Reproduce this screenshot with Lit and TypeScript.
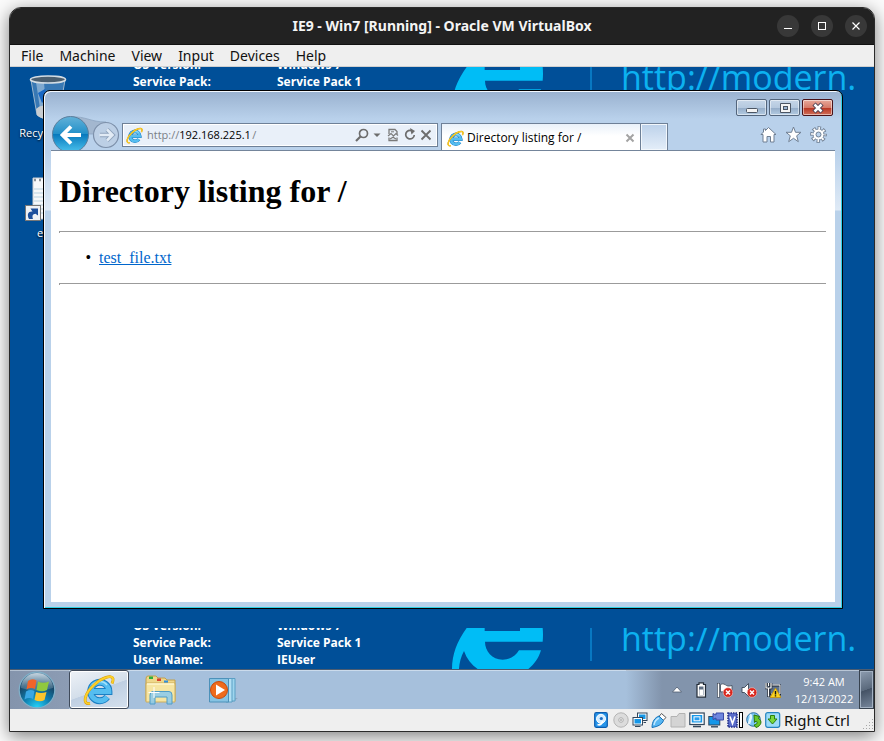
import { LitElement, html, svg, css } from "lit";
import { customElement } from "lit/decorators.js";

const ieLogo = (size: number) => html`
  <svg width=${size} height=${size} viewBox="0 0 32 32" aria-hidden="true">
    <path d="M9 17.5H26A9.2 9.2 0 1 0 24.2 23" fill="none" stroke="#1b7fc4" stroke-width="6.8" />
    <path d="M9 17.5H26A9.2 9.2 0 1 0 24.2 23" fill="none" stroke="#55bdf0" stroke-width="4.8" />
    <path d="M9 11.5A9.5 9.5 0 0 1 24 11" fill="none" stroke="#a5e2fb" stroke-width="1.6" />
    <path d="M7 29.500C-1 31 1 20 11 11C19 3.500 29 .5 30 4.500C30.300 6 30 7.500 29 9.500" fill="none" stroke="#d99a00" stroke-width="2.800" />
    <path d="M7 29.500C-1 31 1 20 11 11C19 3.500 29 .5 30 4.500C30.300 6 30 7.500 29 9.500" fill="none" stroke="#fbd02b" stroke-width="1.900" />
  </svg>`;

const icon = (w: number, h: number, body: unknown) => html`
  <svg width=${w} height=${h} viewBox="0 0 ${w} ${h}" aria-hidden="true">${body}</svg>`;

const redX = (cx: number, cy: number) => svg`
  <circle cx=${cx} cy=${cy} r="4.800" fill="#d9251c" stroke="#f6c9c4" stroke-width=".6" />
  <path d="M${cx - 2} ${cy - 2}l4 4m0-4l-4 4" stroke="#fff" stroke-width="1.500" />`;

const trayIcons = [
  { name: "Show hidden icons", art: icon(16, 16, svg`<path d="M3.500 10L8 5L12.500 10Z" fill="#fff" stroke="#4e5c70" stroke-width=".8" />`) },
  { name: "Battery", art: icon(16, 16, svg`
      <path d="M6 .8H10.500V2.500H12.500V15.200H4V2.500H6Z" fill="#fff" stroke="#222c38" stroke-width="1.200" />
      <path d="M6 4.500H10.500V13.300H6Z" fill="#5f6e82" /><path d="M6.400 7.500H10.100V13H6.400Z" fill="#fff" />`) },
  { name: "Action Center", art: icon(16, 16, svg`
      <path d="M1.500 1V15.500" stroke="#2e3949" stroke-width="3" /><path d="M1.500 1.500V15" stroke="#fff" stroke-width="1.600" />
      <path d="M3.500 2.500C6 1 8 2.500 9.500 3.500C11 4.500 13.500 4 15 3.500V10C12 12 9 9 3.500 10Z" fill="#fff" stroke="#3a4657" stroke-width=".8" />${redX(11, 10.5)}`) },
  { name: "Volume", art: icon(16, 16, svg`
      <path d="M1 5.500H3.500L7.500 1.500V14.500L3.500 10.500H1Z" fill="#fff" stroke="#3a4657" stroke-width=".9" />${redX(11, 10.5)}`) },
  { name: "Network", art: icon(16, 16, svg`
      <path d="M4.500 3.500H15.500V12.500H4.500Z" fill="#5f738c" stroke="#1e2732" stroke-width="2" /><path d="M5.500 3H15V12H6" fill="none" stroke="#fff" stroke-width="1" />
      <path d="M1 1V6H6V1M3.500 6V15M3.500 1V4" fill="none" stroke="#1e2732" stroke-width="2.600" /><path d="M1 1V6H6V1M3.500 6V14.500M3.500 1V4" fill="none" stroke="#fff" stroke-width="1.200" />
      <path d="M10.500 6L16 15.500H5Z" fill="#fbd21e" stroke="#c08a00" stroke-width=".7" /><path d="M10.500 9V12.500M10.500 13.300V14.600" stroke="#111" stroke-width="1.400" />`) },
];

const statusIcons = [
  { name: "Hard disks", art: icon(16, 16, svg`
      <rect x=".7" y=".7" width="12.600" height="14.600" rx="1.500" fill="#2795ea" stroke="#0b5cae" stroke-width="1.200" />
      <circle cx="7" cy="6.800" r="4.500" fill="#d4edff" stroke="#fff" /><circle cx="7.300" cy="6.500" r="1.600" fill="#1c6cc4" />
      <path d="M3.500 12.500C6 13.500 8.500 12 8.500 9" stroke="#fff" stroke-width="1.600" fill="none" />`) },
  { name: "Optical drives", art: icon(16, 16, svg`
      <circle cx="8" cy="8" r="7.200" fill="#dcdcdc" stroke="#b4b4b4" /><circle cx="8" cy="8" r="2.300" fill="#ececec" stroke="#b0b0b0" /><circle cx="8" cy="8" r=".8" fill="#888" />`) },
  { name: "Network adapters", art: icon(16, 16, svg`
      <rect x="5.500" y="1" width="9.500" height="7.500" fill="#fff" stroke="#33475c" /><rect x="7" y="2.500" width="6.500" height="4.500" fill="#1597e8" />
      <rect x="1" y="5.500" width="9.500" height="7.500" fill="#fff" stroke="#33475c" /><rect x="2.500" y="7" width="6.500" height="4.500" fill="#1597e8" />
      <path d="M3 14.500H8.500M11.500 10.500H14" stroke="#33475c" />`) },
  { name: "USB devices", art: icon(16, 16, svg`
      <path d="M10.500 1.500L15 5.500L12 8.500L8 4.500Z" fill="#fff" stroke="#555" /><path d="M8 4L12.500 8.500C11 12.500 7 14.500 1 15.500C1 9.500 4 5.500 8 4Z" fill="#58b7f2" stroke="#1470b8" />
      <path d="M3 13C3.500 9.500 6 7 8 6" stroke="#c1e8ff" stroke-width="1.500" fill="none" />`) },
  { name: "Shared folders", art: icon(16, 16, svg`
      <path d="M1 4.500H7L9 1.500H15V15H1Z" fill="#d4d4d4" stroke="#b2b2b2" />`) },
  { name: "Display", art: icon(16, 16, svg`
      <rect x=".8" y="1" width="14.400" height="11.500" fill="#fff" stroke="#33475c" stroke-width="1.200" /><rect x="2.800" y="3" width="10.400" height="7.500" fill="#1597e8" />
      <rect x="5" y="4.800" width="6" height="4" fill="#2a9df0" stroke="#fff" /><path d="M4 14.500H12" stroke="#33475c" stroke-width="1.600" />`) },
  { name: "Recording", art: icon(16, 16, svg`
      <rect x=".8" y="4.500" width="11" height="8.500" fill="#1597e8" stroke="#33475c" /><path d="M3 14.800H10" stroke="#33475c" stroke-width="1.400" />
      <path d="M5 1.500L8 3V1H15.500V8H8V6L5 7.500Z" fill="#6e86de" stroke="#3a4aa5" />`) },
  { name: "Processor features", art: icon(16, 16, svg`
      <rect x="1" y="1" width="9" height="14" fill="#5a6cc9" stroke="#27338a" stroke-width="1.600" stroke-dasharray="1.500 1" />
      <path d="M3 4.500L5.500 11.500L8 4.500" fill="none" stroke="#fff" stroke-width="1.600" /><rect x="12.500" y=".5" width="3" height="15" fill="#fff" stroke="#000" />`) },
  { name: "Mouse integration", art: icon(16, 16, svg`
      <circle cx="7.500" cy="7.500" r="6.800" fill="#7cc6f2" stroke="#2d6fa5" /><path d="M4 2.500C6.500 4.500 4 7 3 12" stroke="#e4f6ff" stroke-width="2.500" fill="none" />
      <path d="M8 3L13.500 4.500L12.500 6.500C16.500 8.500 15.500 14 10 15.500L8 13C11.500 12.500 12 10 10 9L8.500 10.500Z" fill="#69c92c" stroke="#2b7608" />`) },
  { name: "Keyboard capture", art: icon(16, 16, svg`
      <rect x=".7" y=".7" width="14" height="14.600" rx="2" fill="#9ddcf8" stroke="#2584c0" stroke-width="1.200" /><path d="M5.500 3.500H9.500V7H12L7.500 12L3 7H5.500Z" fill="#7ad83c" stroke="#2b7f0d" />`) },
];

@customElement("desktop-wallpaper")
class DesktopWallpaper extends LitElement {
  static styles = css`
    :host { display: block; }
    .strip {
      display: grid;
      grid-template-columns: 144px 175px 138px 31px minmax(0, 1fr);
      grid-template-rows: 41px;
      height: 41px;
      padding: 0 20px 0 123px;
      overflow: hidden;
      align-items: start;
    }
    .facts {
      align-self: end;
      padding-bottom: 1px;
      font: 700 12px/17px "Open Sans", "Noto Sans", sans-serif;
      color: #fff;
      white-space: nowrap;
    }
    .logo { display: block; }
    .rule { width: 2px; height: 33px; background: #0878c2; }
    .address {
      height: 41px;
      overflow: hidden;
      font: 400 34px/21px "Open Sans", "Noto Sans", sans-serif;
      color: #0cb1f0;
      white-space: nowrap;
    }
  `;
  render() {
    return html`
      <div class="strip">
        <div class="facts">OS Version:<br />Service Pack:<br />User Name:</div>
        <div class="facts">Windows 7<br />Service Pack 1<br />IEUser</div>
        <svg class="logo" width="92" height="41" viewBox="0 0 276 123" aria-hidden="true">
          <path fill="#00bdf6" d="M44 0H98V9H204V0H272Q274 20 272 41H99C99 70 120 94 152 95C175 95 192 82 201 67H267C260 90 248 108 229 123H77C58 110 44 92 36 69C27 85 22 105 21 123H0C0 80 15 40 44 0Z" />
        </svg>
        <div class="rule"></div>
        <div class="address">http://modern.</div>
      </div>`;
  }
}

@customElement("browser-window")
class BrowserWindow extends LitElement {
  static styles = css`
    :host {
      display: flex;
      flex-direction: column;
      box-sizing: border-box;
      border: 1px solid #000;
      border-radius: 7px 7px 0 0;
      box-shadow: inset 1px 1px 0 #f4f9ff, inset -1px -1px 0 #2fd0e6;
      background: linear-gradient(#99b1cf, #b9d1eb 28px, #b9d1eb 60px, #dfeaf6 119px, #b9d1ea 120px);
      padding: 0 7px 6px;
      font: 12px/16px "Open Sans", "Noto Sans", sans-serif;
      color: #000;
    }
    button { padding: 0; border: 0; background: none; font: inherit; color: inherit; display: block; }
    svg { display: block; flex: none; }
    .caption { display: flex; justify-content: flex-end; gap: 2px; padding: 8px 2px 0 0; }
    .cap {
      box-sizing: border-box;
      width: 31px;
      height: 17px;
      border: 1px solid #53657c;
      border-radius: 2px;
      box-shadow: inset 0 0 0 1px rgba(255, 255, 255, 0.5);
      background: linear-gradient(#c6d6e8, #b5c9df 50%, #93abc7 51%, #b3cbe2);
      display: grid;
      place-items: center;
    }
    .cap.close { border-color: #4a1218; background: linear-gradient(#e8a99b, #d67b6a 50%, #b8321f 51%, #d0705a); }
    .nav {
      display: flex;
      align-items: flex-start;
      height: 34px;
      overflow: hidden;
      border-bottom: 1px solid #74859b;
      padding: 0 8px 0 1px;
    }
    .travel { display: flex; width: 70px; flex: none; }
    .field {
      flex: 0 1 316px;
      min-width: 0;
      box-sizing: border-box;
      display: flex;
      align-items: center;
      height: 24px;
      margin-top: 7px;
      padding: 0 4px 0 3px;
      border: 1px solid #6e8097;
      box-shadow: inset 0 0 0 1px #fff;
      background: #e9f0f9;
      font-size: 11px;
    }
    .field label { display: flex; align-items: center; flex: 1; min-width: 0; color: #7a7f86; }
    .field label svg { margin-right: 4px; }
    .url { width: 73px; padding: 0; border: 0; outline: 0; background: none; font: inherit; color: #000; }
    .tools { display: flex; align-items: center; gap: 2px; }
    .tab {
      flex: 0 1 200px;
      min-width: 0;
      box-sizing: border-box;
      height: 27px;
      margin: 7px 0 0 3px;
      padding: 2px 4px 0 5px;
      display: flex;
      align-items: center;
      gap: 3px;
      border: 1px solid #6e8097;
      border-bottom: 0;
      background: linear-gradient(#e9f1fa, #fff 12px);
      white-space: nowrap;
    }
    .tab span { flex: 1; }
    .newtab {
      box-sizing: border-box;
      flex: none;
      width: 27px;
      height: 27px;
      margin-top: 7px;
      border: 1px solid #6e8097;
      border-left: 0;
      border-bottom: 0;
      box-shadow: inset 0 0 0 1px #f2f7fc;
      background: linear-gradient(#bcd1ea, #e4eef9);
    }
    .commands { display: flex; gap: 8px; margin: 10px 0 0 auto; }
    .page {
      flex: 1;
      background: #fff;
      padding: 0 9px 0 8px;
      font: 16px/18px "Liberation Serif", serif;
      overflow: hidden;
    }
    h1 { margin: 21px 0; font-size: 32px; line-height: 38px; }
    hr { box-sizing: border-box; height: 2px; margin: 0; border: 0 solid #9b9b9b; border-width: 1px 0 0 1px; }
    ul { margin: 16px 0; padding-left: 40px; list-style-type: "•\\a0\\a0"; }
    a { color: #0066cc; }
  `;
  render() {
    return html`
      <div class="caption">
        <button class="cap" aria-label="Minimize">${icon(14, 12, svg`<rect x="1.500" y="6.500" width="11" height="4" rx="1" fill="#f4f4f4" stroke="#4b5563" />`)}</button>
        <button class="cap" aria-label="Maximize">${icon(14, 12, svg`<path d="M2.500 1.500H12.500V10.500H2.500Z" fill="#f4f4f4" stroke="#4b5563" /><rect x="5.500" y="4.500" width="4" height="3" fill="#9bb4d2" stroke="#4b5563" />`)}</button>
        <button class="cap close" aria-label="Close">${icon(14, 12, svg`<path d="M3 2L11 10M11 2L3 10" stroke="#4a3f52" stroke-width="4.500" /><path d="M3.500 2.500L10.500 9.500M10.500 2.500L3.500 9.500" stroke="#fff" stroke-width="2.500" />`)}</button>
      </div>
      <div class="nav">
        <div class="travel">
          ${icon(70, 36, svg`
            <defs>
              <linearGradient id="back" x1="0" y1="0" x2="0" y2="1"><stop offset="0" stop-color="#62b1d8" /><stop offset=".48" stop-color="#2290c9" /><stop offset=".5" stop-color="#0779bd" /><stop offset="1" stop-color="#4cc3ee" /></linearGradient>
            </defs>
            <path d="M19 1C34 0 38 6 54 6V18H19Z" fill="#a3b7cf" stroke="#8da4c0" stroke-width=".8" />
            <circle cx="54" cy="19" r="12.500" fill="#bccfe5" stroke="#7d90aa" stroke-width="1.200" />
            <path d="M48 19H60M55 13.500L60.500 19L55 24.500" fill="none" stroke="#8fa3bc" stroke-width="4.500" />
            <path d="M47.500 19H60M55 13.500L60.500 19L55 24.500" fill="none" stroke="#e2ebf5" stroke-width="2.600" />
            <circle cx="18.500" cy="18.500" r="18" fill="url(#back)" stroke="#5c7e9c" />
            <path d="M11 19H29M19 10.500L10.500 19L19 27.500" fill="none" stroke="#fff" stroke-width="3.800" />`)}
        </div>
        <div class="field">
          <label>${ieLogo(17)}http://<input class="url" aria-label="Address" value="192.168.225.1" />/</label>
          <div class="tools">
            <button aria-label="Search">${icon(14, 16, svg`<circle cx="8.500" cy="6.500" r="4" fill="none" stroke="#6d6d6d" stroke-width="1.700" /><path d="M5.500 9.500L1 14" stroke="#6d6d6d" stroke-width="2.200" />`)}</button>
            <button aria-label="Search options">${icon(12, 16, svg`<path d="M2.500 6.500H9.500L6 10Z" fill="#6d6d6d" />`)}</button>
            <button aria-label="Compatibility view">${icon(16, 16, svg`<path d="M4 7V2.500H10L12 4.500V7M4 10.500V13.500H12V10.500" fill="none" stroke="#7a7a7a" stroke-width="1.300" /><path d="M3 9L6 6.500L8.500 9L11 6.500L13 8.500M5 12L8 10.200L11 12" fill="none" stroke="#7a7a7a" stroke-width="1.200" /><path d="M6 4.800H9" stroke="#7a7a7a" />`)}</button>
            <button aria-label="Refresh">${icon(14, 16, svg`<path d="M9 3.800A4.300 4.300 0 1 0 11.300 8" fill="none" stroke="#6d6d6d" stroke-width="1.700" /><path d="M7 1L12 4L8.500 7.500Z" fill="#6d6d6d" />`)}</button>
            <button aria-label="Stop">${icon(14, 16, svg`<path d="M2.500 3.500L11.500 12.500M11.500 3.500L2.500 12.500" stroke="#6d6d6d" stroke-width="1.900" />`)}</button>
          </div>
        </div>
        <div class="tab">${ieLogo(17)}<span>Directory listing for /</span>
          <button aria-label="Close tab">${icon(12, 12, svg`<path d="M2.500 2.500L9.500 9.500M9.500 2.500L2.500 9.500" stroke="#a3a3a3" stroke-width="2" />`)}</button>
        </div>
        <button class="newtab" aria-label="New tab"></button>
        <div class="commands">
          <button aria-label="Home">${icon(17, 17, svg`<path d="M8.500 1.500L16 8.500H14V16H10.500V10.500H7V16H3V8.500H1L3.500 6V3H5.500V4.500Z" fill="#fff" stroke="#6f7f93" />`)}</button>
          <button aria-label="Favorites">${icon(17, 17, svg`<path d="M8.500 1L10.500 6.300H16L11.700 9.800L13.300 15.700L8.500 12.300L3.700 15.700L5.300 9.800L1 6.300H6.500Z" fill="#fff" stroke="#6f7f93" />`)}</button>
          <button aria-label="Tools">${icon(17, 17, svg`
            <circle cx="8.500" cy="8.500" r="6.500" fill="none" stroke="#6f7f93" stroke-width="3.600" stroke-dasharray="3.300 1.805" stroke-dashoffset="1.650" />
            <circle cx="8.500" cy="8.500" r="5.500" fill="#fff" stroke="#6f7f93" />
            <circle cx="8.500" cy="8.500" r="6" fill="none" stroke="#fff" stroke-width="2.800" stroke-dasharray="1.600 3.112" stroke-dashoffset=".8" />
            <circle cx="8.500" cy="8.500" r="2.500" fill="#b9d1eb" stroke="#6f7f93" />`)}</button>
        </div>
      </div>
      <main class="page">
        <h1>Directory listing for /</h1>
        <hr />
        <ul><li><a href="#test_file.txt">test_file.txt</a></li></ul>
        <hr />
      </main>`;
  }
}

@customElement("win-taskbar")
class WinTaskbar extends LitElement {
  static styles = css`
    :host {
      display: flex;
      height: 39px;
      border-top: 1px solid #4c5c70;
      box-shadow: inset 0 1px 0 #cbdbec;
      background: #a6c0dc;
      font: 12px/17px "Open Sans", "Noto Sans", sans-serif;
    }
    button { padding: 0; border: 0; background: none; font: inherit; display: grid; place-items: center; }
    svg { display: block; }
    .start { width: 59px; background: linear-gradient(90deg, #8494ac, #8c9cb4); padding-right: 5px; box-shadow: inset 0 1px 0 #b3c0d0; }
    .app { width: 60px; }
    .app + .app { margin-left: 2px; }
    .app.open {
      box-sizing: border-box;
      border: 1px solid #3f4a5a;
      border-radius: 3px;
      box-shadow: inset 0 0 0 1px #fff;
      background: linear-gradient(160deg, #eef2f7, #d3deea 50%, #bfcfe2 51%, #d5e1ee);
    }
    .tray {
      margin-left: auto;
      display: flex;
      align-items: center;
      padding-left: 43px;
      background: linear-gradient(90deg, #a6c0dc, #8294ac 36px);
      box-shadow: inset 0 1px 0 #b9c6d6;
    }
    .notify { display: flex; gap: 8px; margin-right: 8px; }
    time { width: 70px; text-align: center; font-size: 11px; color: #fff; white-space: nowrap; }
    .peek {
      box-sizing: border-box;
      width: 15px;
      height: 39px;
      border: 1px solid #37424f;
      box-shadow: inset 0 0 0 1px #a3b1c2;
      background: linear-gradient(160deg, #8d9caf, #5a697c 50%, #445265 51%, #78889d);
    }
  `;
  render() {
    return html`
      <button class="start" aria-label="Start">${icon(38, 38, svg`
        <defs>
          <radialGradient id="orb" cx=".5" cy="1" r=".95"><stop offset="0" stop-color="#26d5fb" /><stop offset=".4" stop-color="#0f7fb0" /><stop offset=".75" stop-color="#174667" /><stop offset="1" stop-color="#49708d" /></radialGradient>
          <linearGradient id="gloss" x1="0" y1="0" x2="0" y2="1"><stop offset="0" stop-color="#dbe6ee" stop-opacity=".85" /><stop offset="1" stop-color="#8fb0c4" stop-opacity=".25" /></linearGradient>
        </defs>
        <circle cx="19" cy="19" r="17.800" fill="url(#orb)" stroke="#7fb0c9" stroke-width="1.200" />
        <path d="M3 17A16 15 0 0 1 35 17Q19 22 3 17Z" fill="url(#gloss)" />
        <path d="M10 10Q14 7 18.500 9.500L17 18Q12.500 16 8.500 18.500Z" fill="#f0642a" />
        <path d="M20 10.500Q25 13 31 10.500L29 19Q24 21.500 18.500 19Z" fill="#90c83e" />
        <path d="M8 20.500Q12.500 18 16.500 20L15 28Q11 26 6.500 28.500Z" fill="#3aa7e4" />
        <path d="M18 21Q23 23 28.500 21L26.500 29Q22 31.500 16.500 29Z" fill="#fdc52b" />`)}</button>
      <button class="app open" aria-label="Internet Explorer">${ieLogo(32)}</button>
      <button class="app" aria-label="Windows Explorer">${icon(34, 32, svg`
        <path d="M2 5Q2 2 4 2H12L14 4H21L23 6H31V27H2Z" fill="#efd78a" stroke="#c2a04c" />
        <rect x="5" y="2.500" width="4" height="2.500" fill="#2eae3d" /><rect x="13" y="4.500" width="4" height="2.500" fill="#d8402e" /><rect x="20" y="6.500" width="4" height="2.500" fill="#2d8fe0" />
        <path d="M2 9H31V28H2Z" fill="#f6e5a2" stroke="#cdae5c" /><path d="M3 10H30" stroke="#fff6ce" stroke-width="1.500" />
        <path d="M6 30V21Q6 17.500 9 17.500H25Q28 17.500 28 21V30H23V23H11V30Z" fill="#90cbe9" fill-opacity=".9" stroke="#4e9cc6" />
        <path d="M10 13V24M4.500 18.500H15.500" stroke="#fff" stroke-width="1" />`)}</button>
      <button class="app" aria-label="Windows Media Player">${icon(30, 28, svg`
        <path d="M5 24L30 22L24 26H6Z" fill="#7e8fa5" opacity=".6" /><path d="M20 2.500H27V25H20Z" fill="#9ed5ee" stroke="#5b9fc4" /><path d="M18 2.500H24V26H18Z" fill="#b3dff3" stroke="#5b9fc4" />
        <path d="M1.500 2.500H20.500V26H1.500Z" fill="#86c3e3" stroke="#4c91b9" /><circle cx="11" cy="14" r="8.500" fill="#ee6b1c" stroke="#c94a0b" /><path d="M8 8.500L17 14L8 19.500Z" fill="#fff" />`)}</button>
      <div class="tray">
        <div class="notify">${trayIcons.map((t) => html`<button aria-label=${t.name}>${t.art}</button>`)}</div>
        <time datetime="2022-12-13T09:42">9:42 AM<br />12/13/2022</time>
        <button class="peek" aria-label="Show desktop"></button>
      </div>`;
  }
}

@customElement("app-root")
class AppRoot extends LitElement {
  static styles = css`
    :host {
      display: flex;
      box-sizing: border-box;
      min-height: 100vh;
      padding: 7px 9px 9px;
      overflow: hidden;
      background: #fbfbfb;
      font: 15px/20px "Noto Sans", "Open Sans", sans-serif;
    }
    button { padding: 0; border: 0; background: none; font: inherit; color: inherit; }
    svg { display: block; }
    .frame {
      flex: 1;
      min-width: 0;
      display: flex;
      flex-direction: column;
      box-sizing: border-box;
      border: 1px solid #2a2a2a;
      border-radius: 12px 12px 0 0;
      overflow: hidden;
      background: #efefef;
      box-shadow: 0 4px 17px rgba(0, 0, 0, 0.5);
    }
    .title {
      display: grid;
      grid-template-columns: 1fr auto 1fr;
      align-items: center;
      height: 36px;
      padding-right: 7px;
      border-bottom: 1px solid #111;
      background: #222;
      color: #f4f4f4;
    }
    h1 { grid-column: 2; margin: 0; padding-left: 7px; font-size: 14px; font-weight: 700; white-space: nowrap; }
    .controls { display: flex; justify-content: flex-end; gap: 12px; }
    .controls button { width: 22px; height: 22px; border-radius: 50%; background: #383838; display: grid; place-items: center; }
    .menu { display: flex; gap: 16px; height: 21px; padding-left: 11px; border-bottom: 1px solid #d0d0d0; font-size: 14px; line-height: 22px; color: #111; }
    .desktop {
      flex: 1;
      position: relative;
      display: flex;
      flex-direction: column;
      justify-content: space-between;
      overflow: hidden;
      background: #004f98;
    }
    .shortcuts {
      position: absolute;
      top: 6px;
      left: 0;
      width: 76px;
      display: grid;
      gap: 32px;
      font: 11px/16px "Open Sans", "Noto Sans", sans-serif;
      color: #fff;
      text-shadow: 0 1px 2px #000;
      text-align: center;
    }
    .shortcuts svg { margin: 0 auto; }
    browser-window { position: absolute; inset: 23px 31px 60px 33px; }
    .status { display: flex; align-items: center; justify-content: flex-end; gap: 3px; height: 22px; font-size: 14px; color: #111; }
    .key { margin-right: 9px; font-size: 15px; white-space: nowrap; }
    .grip { align-self: flex-end; }
  `;
  render() {
    const menus = ["File", "Machine", "View", "Input", "Devices", "Help"];
    return html`
      <div class="frame">
        <header class="title">
          <h1>IE9 - Win7 [Running] - Oracle VM VirtualBox</h1>
          <div class="controls">
            <button aria-label="Minimize window">${icon(22, 22, svg`<path d="M7 13.500H15" stroke="#fff" />`)}</button>
            <button aria-label="Maximize window">${icon(22, 22, svg`<rect x="7.500" y="7.500" width="7" height="7" fill="none" stroke="#fff" />`)}</button>
            <button aria-label="Close window">${icon(22, 22, svg`<path d="M7.500 7.500L14.500 14.500M14.500 7.500L7.500 14.500" stroke="#fff" stroke-width="1.200" />`)}</button>
          </div>
        </header>
        <nav class="menu">${menus.map((m) => html`<button>${m}</button>`)}</nav>
        <section class="desktop">
          <desktop-wallpaper></desktop-wallpaper>
          <desktop-wallpaper></desktop-wallpaper>
          <div class="shortcuts">
            <div>
              ${icon(40, 52, svg`
                <path d="M3 7L9 42Q20 50 31 42L37 7Z" fill="#4b86bd" fill-opacity=".75" stroke="#9cb6cd" /><path d="M8 9L13 42H19L16 10Z" fill="#b9d2e7" opacity=".55" />
                <path d="M10 20L17 16L20 24L14 30Z" fill="#1767c4" /><path d="M8 36Q14 30 20 35V46Q12 46 9 42Z" fill="#c8cdd1" />
                <ellipse cx="20" cy="6.500" rx="17.500" ry="3.500" fill="#4b5f70" stroke="#d4dde4" stroke-width="1.600" />`)}
              Recycle Bin
            </div>
            <div>
              ${icon(48, 52, svg`
                <path d="M9 5H40V46H9Z" fill="#f6f8fa" stroke="#c7ccd1" /><path d="M10 16H39M10 20H39M10 24H39M10 28H39M10 32H39M10 36H39M10 40H39" stroke="#b9d2e0" />
                <path d="M10 7H40" stroke="#8b9198" stroke-width="2.400" stroke-dasharray="2 3" />
                <rect x="1.500" y="32.500" width="15" height="15" fill="#eef1f5" stroke="#777" />
                <path d="M5 46C2.500 41 4.500 38 8.500 38.500L6.500 35.500H14V42.500L11.500 40.800C8.500 41 8 43 9 46Z" fill="#1c4f9c" />`)}
              eula
            </div>
          </div>
          <browser-window></browser-window>
        </section>
        <win-taskbar></win-taskbar>
        <footer class="status">
          ${statusIcons.map((s) => html`<button aria-label=${s.name}>${s.art}</button>`)}
          <span class="key">Right Ctrl</span>
          <svg class="grip" width="12" height="13" viewBox="0 0 12 13" aria-hidden="true"><path d="M10 1.500h1M7 4.500h1M10 4.500h1M4 7.500h1M7 7.500h1M10 7.500h1M1 10.500h1M4 10.500h1M7 10.500h1M10 10.500h1" stroke="#a8a8a8" /></svg>
        </footer>
      </div>`;
  }
}
